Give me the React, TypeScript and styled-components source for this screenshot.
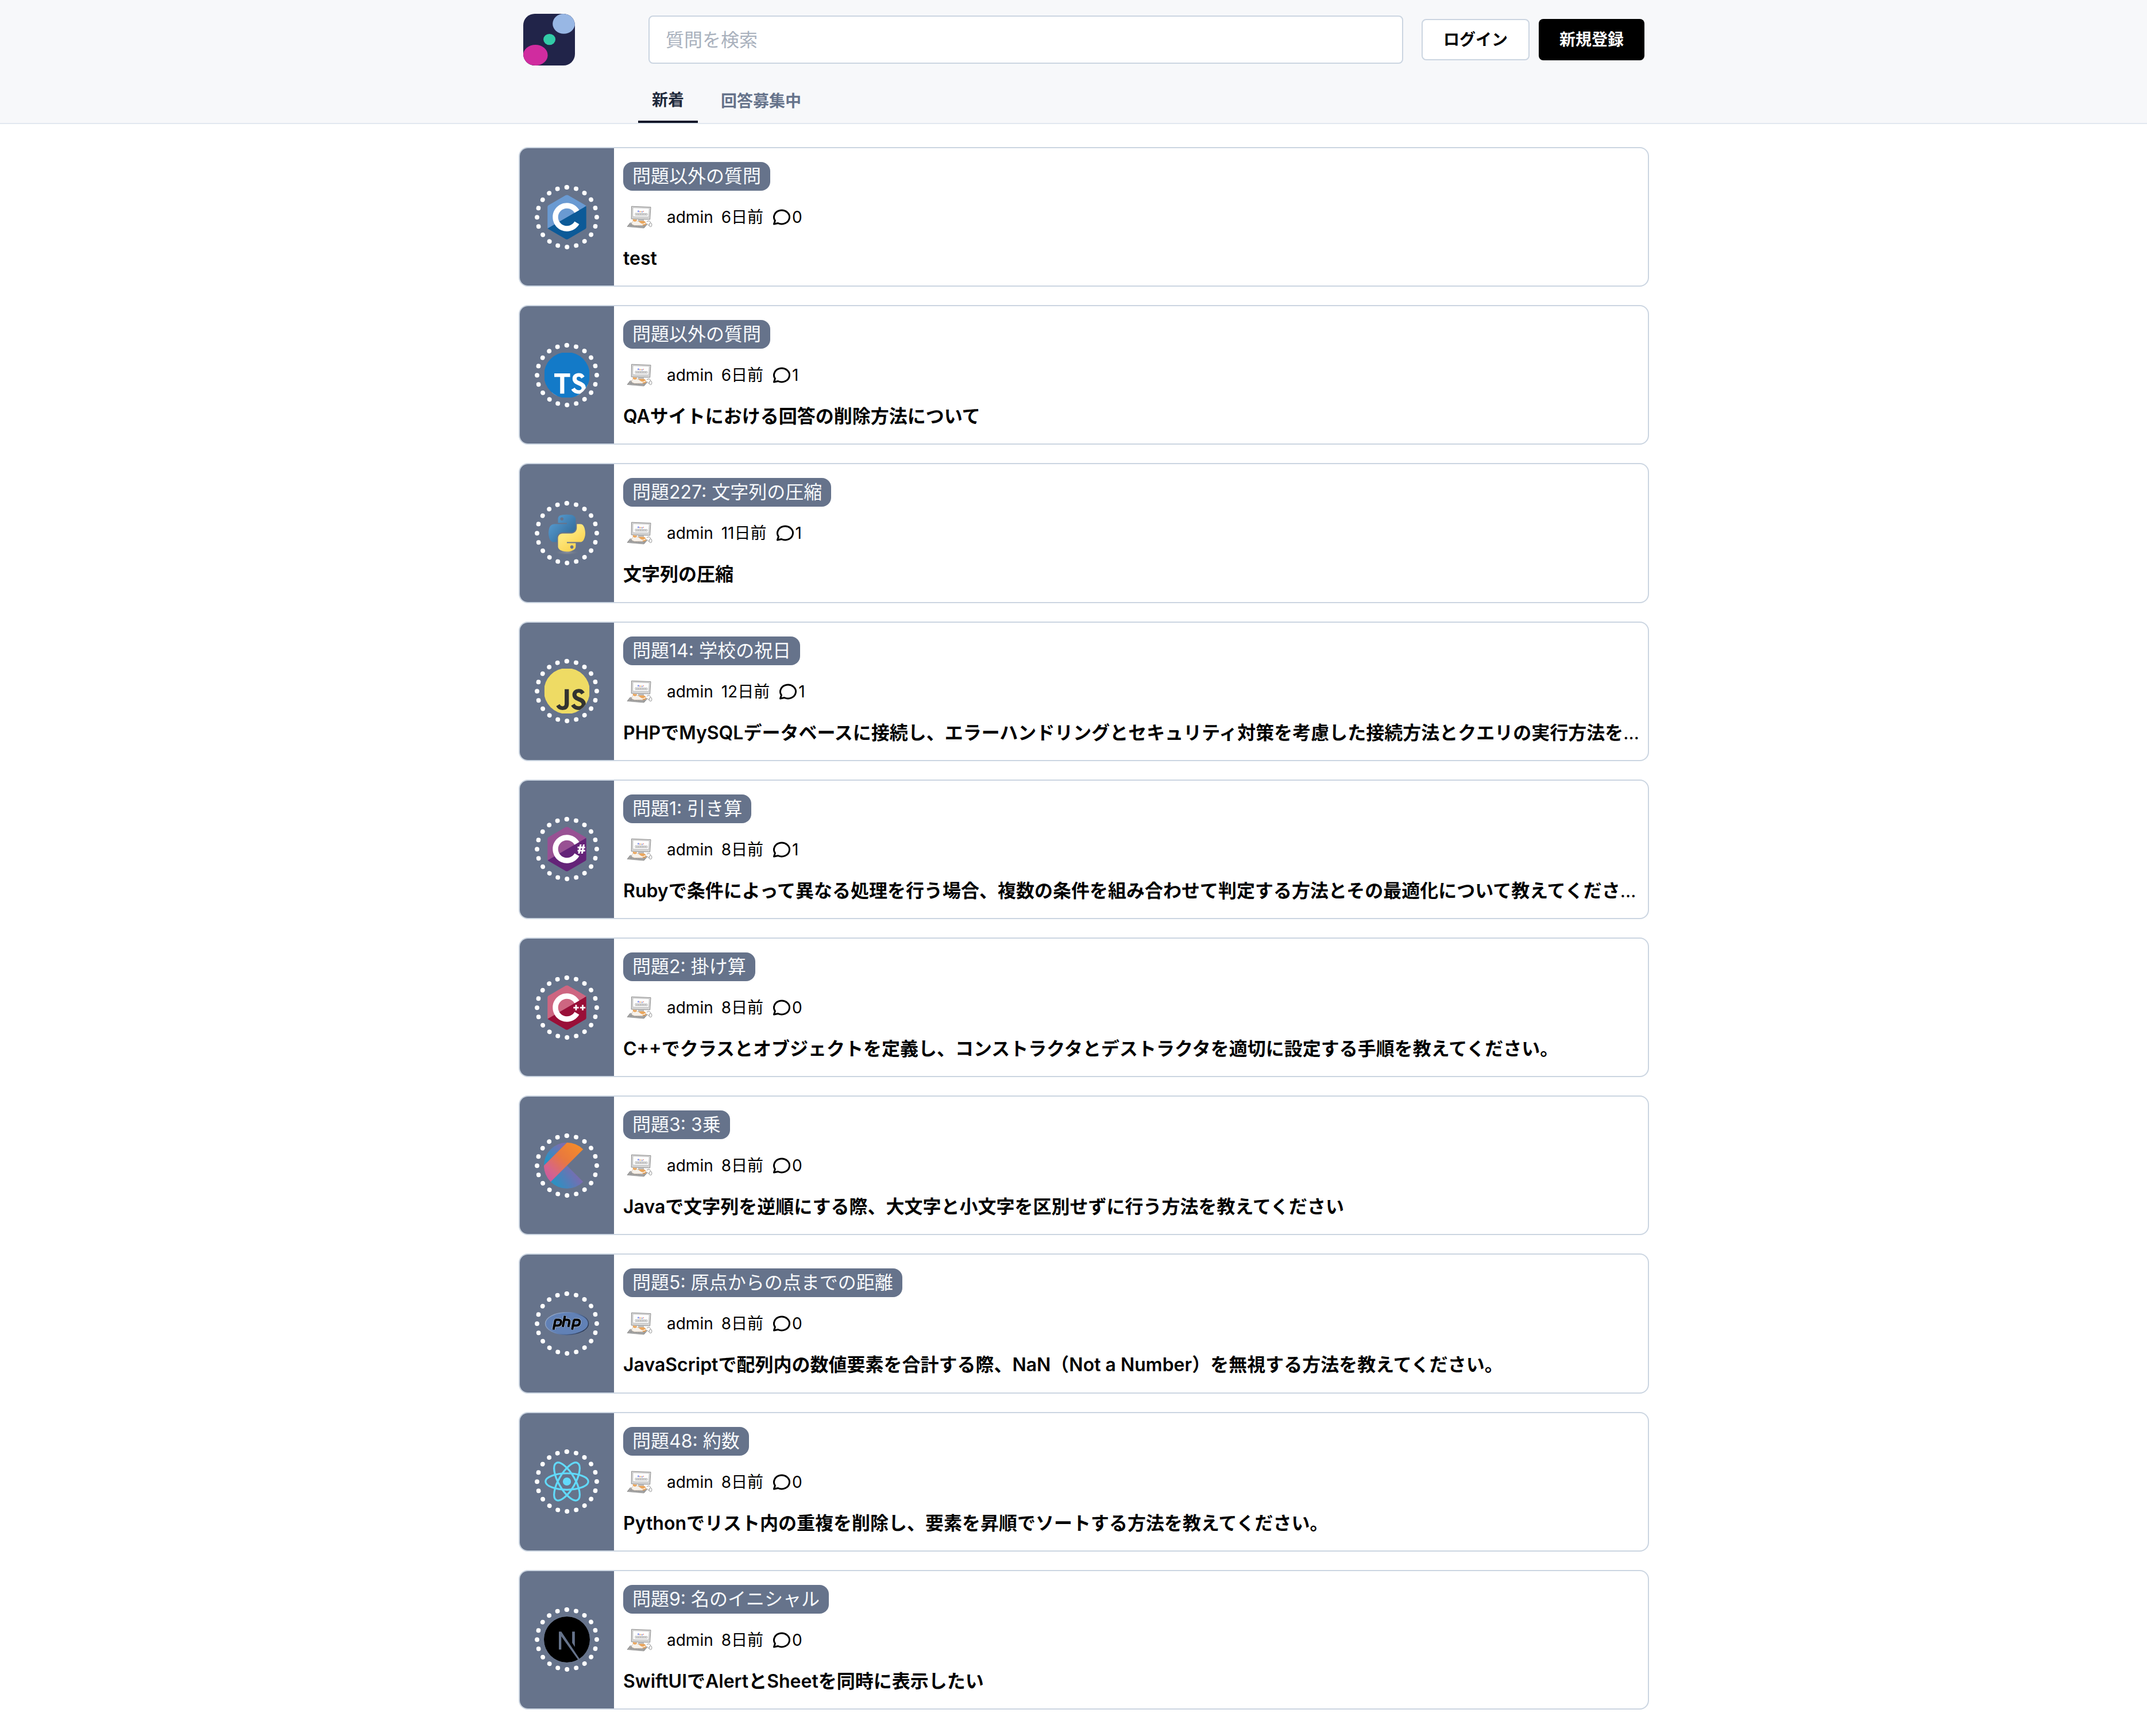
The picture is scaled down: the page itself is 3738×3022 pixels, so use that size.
import React, { useState } from "react";
import styled, { createGlobalStyle, css } from "styled-components";

const GlobalStyle = createGlobalStyle`
  *, *::before, *::after { box-sizing: border-box; }
  body {
    margin: 0;
    background: #ffffff;
    color: #000000;
    font-family: Inter, "Noto Sans CJK JP", sans-serif;
    font-size: 32px;
  }
  a { color: inherit; text-decoration: none; }
`;

const Header = styled.header`
  background: #f7f8fa;
  border-bottom: 2px solid #e2e8f0;
`;

const Container = styled.div`
  width: 100%;
  max-width: 2004px;
  margin: 0 auto;
  padding-left: 36px;
`;

const HeaderInner = styled.div`
  padding: 24px 8px 0;
`;

const TopBar = styled.div`
  display: flex;
  align-items: center;
`;

const LogoLink = styled.a`
  display: block;
  width: 90px;
  height: 90px;
  margin-right: 128px;
  flex: none;
  svg { display: block; }
`;

const SearchForm = styled.form`
  flex: 1;
  min-width: 0;
  display: flex;
`;

const SearchInput = styled.input`
  width: 100%;
  height: 84px;
  padding: 0 28px;
  border: 2px solid #cbd5e1;
  border-radius: 8px;
  background: #ffffff;
  font: inherit;
  outline: none;
  &::placeholder { color: #a9b1bd; opacity: 1; }
`;

const Actions = styled.div`
  display: flex;
  gap: 16px;
  margin-left: 32px;
`;

const Button = styled.button<{ $primary?: boolean }>`
  height: 72px;
  padding: 0 36px;
  border-radius: 8px;
  font-family: inherit;
  font-size: 28px;
  font-weight: 600;
  line-height: 40px;
  white-space: nowrap;
  cursor: pointer;
  ${(p) =>
    p.$primary
      ? css`
          border: 0;
          background: #000000;
          color: #ffffff;
        `
      : css`
          border: 2px solid #cbd5e1;
          background: #ffffff;
          color: #000000;
        `}
`;

const Tabs = styled.nav`
  display: flex;
  gap: 16px;
  margin-top: 24px;
  padding-left: 200px;
`;

const Tab = styled.a<{ $active: boolean }>`
  display: flex;
  align-items: center;
  height: 76px;
  padding: 0 24px;
  font-size: 28px;
  font-weight: 600;
  line-height: 40px;
  color: ${(p) => (p.$active ? "#1e293b" : "#66738b")};
  border-bottom: ${(p) => (p.$active ? "4px solid #0f172a" : "0")};
`;

const List = styled.main`
  display: flex;
  flex-direction: column;
  gap: 32px;
  padding: 40px 0;
`;

const Card = styled.article`
  display: flex;
  border: 2px solid #cbd5e1;
  border-radius: 16px;
  overflow: hidden;
  background: #ffffff;
`;

const LangPanel = styled.div`
  flex: none;
  width: 164px;
  display: grid;
  place-items: center;
  background: #66738b;
`;

const LangRing = styled.div`
  width: 112px;
  height: 112px;
  padding: 8px;
  border: 8px dotted #ffffff;
  border-radius: 50%;
`;

const LangBadge = styled.div`
  width: 80px;
  height: 80px;
  border-radius: 50%;
  overflow: hidden;
  svg { display: block; }
`;

const CardBody = styled.div`
  flex: 1;
  min-width: 0;
  display: flex;
  flex-direction: column;
  align-items: flex-start;
  gap: 21px;
  padding: 24px 8px 22px 16px;
`;

const Problem = styled.a`
  padding: 0 16px;
  border-radius: 16px;
  background: #66738b;
  color: #f8fafc;
  line-height: 50px;
  white-space: nowrap;
`;

const Meta = styled.div`
  display: flex;
  align-items: center;
  gap: 14px;
  height: 50px;
  font-size: 28px;
  line-height: 40px;
`;

const Comments = styled.span`
  display: flex;
  align-items: center;
`;

const Title = styled.h2`
  max-width: 100%;
  margin: 0;
  font-size: 32px;
  font-weight: 400;
  line-height: 1.6;
  white-space: nowrap;
  overflow: hidden;
  text-overflow: ellipsis;
`;

const TitleLink = styled.a`
  font-weight: 600;
`;

const SiteLogo = () => (
  <svg width="90" height="90" viewBox="0 0 90 90" aria-hidden="true">
    <clipPath id="site">
      <rect width="90" height="90" rx="20" />
    </clipPath>
    <g clipPath="url(#site)">
      <rect width="90" height="90" fill="#212449" />
      <ellipse cx="70.6" cy="17.4" rx="19.4" ry="17.4" fill="#98b7e4" />
      <ellipse cx="45.6" cy="44.6" rx="10.5" ry="9.6" fill="#32cca7" />
      <ellipse cx="21.2" cy="72" rx="21.4" ry="18" fill="#d02c9f" />
    </g>
  </svg>
);

const CommentIcon = () => (
  <svg width="36" height="36" viewBox="0 0 24 24" fill="none" stroke="currentColor" strokeWidth="2" strokeLinecap="round" strokeLinejoin="round" aria-hidden="true">
    <path d="M3 20l1.3 -3.9a9 8 0 1 1 3.4 2.9l-4.7 1" />
  </svg>
);

const Avatar = () => (
  <svg width="62" height="48" viewBox="0 0 62 48" role="img" aria-label="admin">
    <path d="M14.5 5.2 48 6.6 46.6 28 14.2 27z" fill="#d5d5d5" stroke="#8e8e8e" strokeWidth="1" />
    <path d="M17 7.6 45.4 8.6 44.4 23.6 16.8 23z" fill="#fdfdfd" stroke="#a9a9a9" strokeWidth=".6" />
    <g>
      <circle cx="26.4" cy="13.8" r="1.5" fill="#7f96ee" />
      <circle cx="29" cy="14.4" r="1" fill="#ee8a80" />
      <circle cx="31" cy="14.4" r="1" fill="#f3d27a" />
      <circle cx="33" cy="14.8" r="1.1" fill="#7f96ee" />
      <circle cx="35.2" cy="14" r=".9" fill="#ee8a80" />
    </g>
    <path d="M21 17.2 42 17.8v3L21 20.4z" fill="#f2f2f2" stroke="#9b9b9b" strokeWidth=".7" />
    <path d="M23 19h17" stroke="#aaa" strokeWidth="1.4" strokeDasharray="2 1" />
    <path d="M27 27.6h8l1 4H26z" fill="#c2c2c2" stroke="#999" strokeWidth=".6" />
    <path d="M12 34 42.5 36 36 43 7 40.4z" fill="#b9b9b9" stroke="#858585" strokeWidth=".8" />
    <path d="M11 36.6 39 39M9.4 38.6 37.4 41" stroke="#6d6d6d" strokeWidth="1.2" strokeDasharray="1.6 1" />
    <path d="M41 32c4-3 8 0 6 3s-4 1.5-3 4" fill="none" stroke="#8e8e8e" strokeWidth="1" />
    <ellipse cx="47.6" cy="37.4" rx="2.4" ry="3.4" fill="#f0f0f0" stroke="#8e8e8e" strokeWidth=".8" />
    <path d="M17 30.5c0-2 .5-3.5 1-3.5l2.4 1.8 2.6-.8c.8 1.6 1.4 3 3.4 3.2 5-1 12-1 13.2 2.6.4 3-3 4.6-7 4.6H20c-4.4-.8-5.6-2.4-5.2-3.8z" fill="#f6f1ea" stroke="#b9a08a" strokeWidth=".5" />
    <path d="M17 30.5c0-2 .5-3.5 1-3.5l2.4 1.8 2.6-.8.8 2.6-3.4 1.4z" fill="#eba65c" />
    <path d="M26.6 31.2c5-1 11-1 12.8 2l-4.8 2.4c-3 .2-5-2-8-4.4z" fill="#eba65c" />
    <path d="M34 37.6c3 .2 5-.6 5.6-2.6" fill="none" stroke="#e39a4e" strokeWidth="1.6" />
  </svg>
);

const C_PATH =
  "M85.3 76.1C81.1 83.5 73.1 88.5 64 88.5c-13.5 0-24.5-11-24.5-24.5s11-24.5 24.5-24.5c9.1 0 17.1 5 21.3 12.5l13-7.5c-6.8-11.9-19.6-20-34.3-20-21.8 0-39.5 17.7-39.5 39.5s17.7 39.5 39.5 39.5c14.6 0 27.4-8 34.2-19.8l-12.9-7.6z";

const HexLogo = ({ top, bottom, mark }: { top: string; bottom: string; mark?: string }) => (
  <>
    <path fill={top} d="M115.4 30.7L67.1 2.9c-.8-.5-1.9-.7-3.1-.7-1.2 0-2.3.3-3.1.7l-48 27.9c-1.7 1-2.9 3.5-2.9 5.4v55.7c0 1.1.2 2.4 1 3.5l106.8-62c-.6-1.2-1.5-2.1-2.4-2.7z" />
    <path fill={bottom} d="M10.7 95.3c.5.8 1.2 1.5 1.9 1.9l48.2 27.9c.8.5 1.9.7 3.1.7 1.2 0 2.3-.3 3.1-.7l48-27.9c1.7-1 2.9-3.5 2.9-5.4V36.1c0-.9-.1-1.9-.6-2.8l-106.6 62z" />
    <path fill="#fff" d={C_PATH} />
    {mark && <path fill="#fff" d={mark} />}
  </>
);

const PHP_STROKES =
  "M32 53.5 26.5 81M31.5 53.5h9.5q8 0 6.5 8t-8.5 8h-9.5M58.5 42.5 52.5 73.5M56.5 53.5h8.5q7 0 5.8 6L68 73.5M84 53.5 78.5 81M83.5 53.5H93q8 0 6.5 8t-8.5 8h-9.5";

const LANG_ART: Record<string, React.ReactNode> = {
  c: <HexLogo top="#6a9ad2" bottom="#0c5a98" />,
  csharp: (
    <HexLogo
      top="#985193"
      bottom="#642378"
      mark="M97 66.2l.9-4.3h-4.2v-4.7h5.1L100 51h4.9l-1.2 6.1h3.8l1.2-6.1h4.8l-1.2 6.1h2.4v4.7h-3.3l-.9 4.3h4.2v4.7h-5.1l-1.2 6h-4.9l1.2-6h-3.8l-1.2 6h-4.8l1.2-6h-2.4v-4.7H97zm4.8 0h3.8l.9-4.3h-3.8l-.9 4.3z"
    />
  ),
  cpp: (
    <HexLogo
      top="#cd6681"
      bottom="#990f38"
      mark="M82.1 61.8h5.2v-5.3h4.4v5.3H97v4.4h-5.3v5.2h-4.4v-5.2h-5.2v-4.4zm18.5 0h5.2v-5.3h4.4v5.3h5.3v4.4h-5.3v5.2h-4.4v-5.2h-5.2v-4.4z"
    />
  ),
  typescript: (
    <>
      <path fill="#fff" d="M22.67 47h99.67v73.67H22.67z" />
      <path fill="#137ac8" d="M1.5 63.91v62.5h125v-125H1.5zm100.73-5a15.56 15.56 0 017.82 4.5 20.58 20.58 0 013 4c0 .16-5.4 3.81-8.69 5.85-.12.08-.6-.44-1.13-1.23a7.09 7.09 0 00-5.87-3.53c-3.79-.26-6.23 1.73-6.21 5a4.58 4.58 0 00.54 2.34c.83 1.73 2.38 2.76 7.24 4.86 8.95 3.85 12.78 6.39 15.16 10 2.66 4 3.25 10.46 1.45 15.24-2 5.2-6.9 8.73-13.83 9.9a38.32 38.32 0 01-9.52-.1 23 23 0 01-12.72-6.63c-1.15-1.27-3.39-4.58-3.25-4.82a9.34 9.34 0 011.15-.73L82 101l3.59-2.08.75 1.11a16.78 16.78 0 004.74 4.54c4 2.1 9.46 1.81 12.16-.62a5.43 5.43 0 00.69-6.92c-1-1.39-3-2.56-8.59-5-6.45-2.78-9.23-4.5-11.77-7.24a16.48 16.48 0 01-3.43-6.25 25 25 0 01-.22-8c1.33-6.23 6-10.58 12.82-11.87a31.66 31.66 0 019.49.26zm-29.34 5.24v5.12H56.66v46.23H45.15V69.26H28.88v-5a49.19 49.19 0 01.12-5.17C29.08 59 39 59 51 59h21.83z" />
    </>
  ),
  python: (
    <>
      <defs>
        <linearGradient id="py-blue" x1="14" y1="14" x2="76" y2="70" gradientUnits="userSpaceOnUse">
          <stop offset="0" stopColor="#5a9fd4" />
          <stop offset="1" stopColor="#306998" />
        </linearGradient>
        <linearGradient id="py-yellow" x1="92" y1="100" x2="62" y2="58" gradientUnits="userSpaceOnUse">
          <stop offset="0" stopColor="#fbd24d" />
          <stop offset="1" stopColor="#fde77c" />
        </linearGradient>
        <radialGradient id="py-shadow">
          <stop offset="0" stopColor="#b8b8b8" stopOpacity=".5" />
          <stop offset="1" stopColor="#7f7f7f" stopOpacity="0" />
        </radialGradient>
      </defs>
      <ellipse cx="64" cy="118" rx="34" ry="7" fill="url(#py-shadow)" />
      <g transform="translate(0 10.26)">
        <path fill="url(#py-blue)" d="M63.391 1.988c-4.222.02-8.252.379-11.8 1.007-10.45 1.846-12.346 5.71-12.346 12.837v9.411h24.693v3.137H29.977c-7.176 0-13.46 4.313-15.426 12.521-2.268 9.405-2.368 15.275 0 25.096 1.755 7.311 5.947 12.519 13.124 12.519h8.491V67.234c0-8.151 7.051-15.34 15.426-15.34h24.665c6.866 0 12.346-5.654 12.346-12.548V15.833c0-6.693-5.646-11.72-12.346-12.837-4.244-.706-8.645-1.027-12.866-1.008zM50.037 9.557c2.55 0 4.634 2.117 4.634 4.721 0 2.593-2.083 4.69-4.634 4.69-2.56 0-4.633-2.097-4.633-4.69-.001-2.604 2.073-4.721 4.633-4.721z" />
        <path fill="url(#py-yellow)" d="M91.682 28.38v10.966c0 8.5-7.208 15.655-15.426 15.655H51.591c-6.756 0-12.346 5.783-12.346 12.549v23.515c0 6.691 5.818 10.628 12.346 12.547 7.816 2.297 15.312 2.713 24.665 0 6.216-1.801 12.346-5.423 12.346-12.547v-9.412H63.938v-3.138h37.012c7.176 0 9.852-5.005 12.348-12.519 2.578-7.735 2.467-15.174 0-25.096-1.774-7.145-5.161-12.521-12.348-12.521h-9.268zM77.809 87.927c2.561 0 4.634 2.097 4.634 4.692 0 2.602-2.074 4.719-4.634 4.719-2.55 0-4.633-2.117-4.633-4.719 0-2.595 2.083-4.692 4.633-4.692z" />
      </g>
    </>
  ),
  javascript: (
    <>
      <path fill="#eedb64" d="M1.408 1.408h125.184v125.185H1.408z" />
      <path fill="#323330" d="M116.347 96.736c-.917-5.711-4.641-10.508-15.672-14.981-3.832-1.761-8.104-3.022-9.377-5.926-.452-1.69-.512-2.642-.226-3.665.821-3.32 4.784-4.355 7.925-3.403 2.023.678 3.938 2.237 5.093 4.724 5.402-3.498 5.391-3.475 9.163-5.879-1.381-2.141-2.118-3.129-3.022-4.045-3.249-3.629-7.676-5.498-14.756-5.355l-3.688.477c-3.534.893-6.902 2.748-8.877 5.235-5.926 6.724-4.236 18.492 2.975 23.335 7.104 5.332 17.54 6.545 18.873 11.531 1.297 6.104-4.486 8.08-10.234 7.378-4.236-.881-6.592-3.034-9.139-6.949-4.688 2.713-4.688 2.713-9.508 5.485 1.143 2.499 2.344 3.63 4.26 5.795 9.068 9.198 31.76 8.746 35.83-5.176.165-.478 1.261-3.666.38-8.581zM69.462 58.943H57.753l-.048 30.272c0 6.438.333 12.34-.714 14.149-1.713 3.558-6.152 3.117-8.175 2.427-2.059-1.012-3.106-2.451-4.319-4.485-.333-.584-.583-1.036-.667-1.071l-9.52 5.83c1.583 3.249 3.915 6.069 6.902 7.901 4.462 2.678 10.459 3.499 16.731 2.059 4.082-1.189 7.604-3.652 9.448-7.401 2.666-4.915 2.094-10.864 2.07-17.444.06-10.735.001-21.468.001-32.237z" />
    </>
  ),
  kotlin: (
    <>
      <defs>
        <linearGradient id="kt-bottom" x1="30" y1="128" x2="98" y2="84" gradientUnits="userSpaceOnUse">
          <stop offset=".1" stopColor="#2e90c2" />
          <stop offset="1" stopColor="#8069ae" />
        </linearGradient>
        <linearGradient id="kt-top" x1="4" y1="56" x2="58" y2="4" gradientUnits="userSpaceOnUse">
          <stop offset=".1" stopColor="#2593c6" />
          <stop offset=".9" stopColor="#7c6eb0" />
        </linearGradient>
        <linearGradient id="kt-band" x1="0" y1="104" x2="92" y2="8" gradientUnits="userSpaceOnUse">
          <stop offset="0" stopColor="#c757a6" />
          <stop offset=".25" stopColor="#d6648a" />
          <stop offset=".6" stopColor="#e8783f" />
          <stop offset="1" stopColor="#f48a2b" />
        </linearGradient>
      </defs>
      <path fill="url(#kt-top)" d="M0 0h64L0 64z" />
      <path fill="url(#kt-bottom)" d="M0 128l64-64 64 64z" />
      <path fill="url(#kt-band)" d="M64 0L0 64v64L128 0z" />
    </>
  ),
  php: (
    <>
      <defs>
        <linearGradient id="php-rim" x1="20" y1="32" x2="100" y2="96" gradientUnits="userSpaceOnUse">
          <stop offset="0" stopColor="#a9b9d2" stopOpacity=".7" />
          <stop offset=".5" stopColor="#6181b6" />
          <stop offset="1" stopColor="#2c3a55" />
        </linearGradient>
      </defs>
      <ellipse cx="64" cy="64" rx="60" ry="31" fill="#6181b6" stroke="url(#php-rim)" strokeWidth="2.4" />
      <g fill="none">
        <path d={PHP_STROKES} stroke="#b9c7de" strokeWidth="9" />
        <path d={PHP_STROKES} stroke="#000" strokeWidth="6.6" />
      </g>
    </>
  ),
  react: (
    <g fill="none" stroke="#61dafb" strokeWidth="5.2">
      <circle cx="64" cy="64" r="11.4" fill="#61dafb" stroke="none" />
      <ellipse cx="64" cy="64" rx="59.5" ry="22.8" />
      <ellipse cx="64" cy="64" rx="59.5" ry="22.8" transform="rotate(60 64 64)" />
      <ellipse cx="64" cy="64" rx="59.5" ry="22.8" transform="rotate(120 64 64)" />
    </g>
  ),
  next: (
    <path d="M64 0C28.7 0 0 28.7 0 64s28.7 64 64 64c11.2 0 21.7-2.9 30.8-7.9L48.4 55.3v36.6h-6.8V41.8h6.8l50.5 75.8C116.4 106.2 128 86.5 128 64c0-35.3-28.7-64-64-64zm22.1 84.6l-7.5-11.3V41.8h7.5v42.8z" />
  ),
};

type Question = {
  lang: string;
  problem: string;
  ago: string;
  comments: number;
  title: string;
};

const QUESTIONS: Question[] = [
  { lang: "c", problem: "問題以外の質問", ago: "6日前", comments: 0, title: "test" },
  { lang: "typescript", problem: "問題以外の質問", ago: "6日前", comments: 1, title: "QAサイトにおける回答の削除方法について" },
  { lang: "python", problem: "問題227: 文字列の圧縮", ago: "11日前", comments: 1, title: "文字列の圧縮" },
  { lang: "javascript", problem: "問題14: 学校の祝日", ago: "12日前", comments: 1, title: "PHPでMySQLデータベースに接続し、エラーハンドリングとセキュリティ対策を考慮した接続方法とクエリの実行方法を教えてください。" },
  { lang: "csharp", problem: "問題1: 引き算", ago: "8日前", comments: 1, title: "Rubyで条件によって異なる処理を行う場合、複数の条件を組み合わせて判定する方法とその最適化について教えてください。" },
  { lang: "cpp", problem: "問題2: 掛け算", ago: "8日前", comments: 0, title: "C++でクラスとオブジェクトを定義し、コンストラクタとデストラクタを適切に設定する手順を教えてください。" },
  { lang: "kotlin", problem: "問題3: 3乗", ago: "8日前", comments: 0, title: "Javaで文字列を逆順にする際、大文字と小文字を区別せずに行う方法を教えてください" },
  { lang: "php", problem: "問題5: 原点からの点までの距離", ago: "8日前", comments: 0, title: "JavaScriptで配列内の数値要素を合計する際、NaN（Not a Number）を無視する方法を教えてください。" },
  { lang: "react", problem: "問題48: 約数", ago: "8日前", comments: 0, title: "Pythonでリスト内の重複を削除し、要素を昇順でソートする方法を教えてください。" },
  { lang: "next", problem: "問題9: 名のイニシャル", ago: "8日前", comments: 0, title: "SwiftUIでAlertとSheetを同時に表示したい" },
];

const TABS = ["新着", "回答募集中"];

const QuestionCard = ({ question }: { question: Question }) => (
  <Card>
    <LangPanel>
      <LangRing>
        <LangBadge>
          <svg width="80" height="80" viewBox="0 0 128 128" role="img" aria-label={question.lang}>
            {LANG_ART[question.lang]}
          </svg>
        </LangBadge>
      </LangRing>
    </LangPanel>
    <CardBody>
      <Problem href="#">{question.problem}</Problem>
      <Meta>
        <Avatar />
        <span>admin</span>
        <time>{question.ago}</time>
        <Comments>
          <CommentIcon />
          {question.comments}
        </Comments>
      </Meta>
      <Title>
        <TitleLink href="#">{question.title}</TitleLink>
      </Title>
    </CardBody>
  </Card>
);

export default function App() {
  const [active, setActive] = useState(TABS[0]);
  return (
    <div lang="ja">
      <GlobalStyle />
      <Header>
        <Container>
          <HeaderInner>
            <TopBar>
              <LogoLink href="#" aria-label="ホーム">
                <SiteLogo />
              </LogoLink>
              <SearchForm role="search" onSubmit={(e) => e.preventDefault()}>
                <SearchInput type="text" aria-label="質問を検索" placeholder="質問を検索" />
              </SearchForm>
              <Actions>
                <Button type="button">ログイン</Button>
                <Button type="button" $primary>
                  新規登録
                </Button>
              </Actions>
            </TopBar>
            <Tabs>
              {TABS.map((tab) => (
                <Tab key={tab} href="#" $active={tab === active} onClick={() => setActive(tab)}>
                  {tab}
                </Tab>
              ))}
            </Tabs>
          </HeaderInner>
        </Container>
      </Header>
      <Container>
        <List>
          {QUESTIONS.map((q) => (
            <QuestionCard key={q.problem + q.title} question={q} />
          ))}
        </List>
      </Container>
    </div>
  );
}
